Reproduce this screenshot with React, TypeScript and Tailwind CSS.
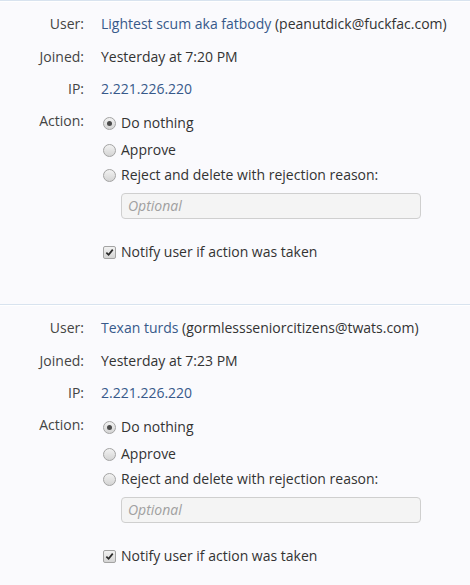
type Entry = {
  name: string;
  email: string;
  joined: string;
  ip: string;
};

const entries: Entry[] = [
  {
    name: "Lightest scum aka fatbody",
    email: "peanutdick@fuckfac.com",
    joined: "Yesterday at 7:20 PM",
    ip: "2.221.226.220",
  },
  {
    name: "Texan turds",
    email: "gormlessseniorcitizens@twats.com",
    joined: "Yesterday at 7:23 PM",
    ip: "2.221.226.220",
  },
];

function Radio({ checked }: { checked?: boolean }) {
  return (
    <span className="ml-[2px] mr-[5px] flex h-[13px] w-[13px] shrink-0 items-center justify-center rounded-full border border-[#a3a3a3] bg-gradient-to-b from-[#f2f2f2] to-[#d4d4d4]">
      {checked && (
        <span className="h-[5px] w-[5px] rounded-full bg-[#4a4a4a]" />
      )}
    </span>
  );
}

function Checkbox() {
  return (
    <span className="ml-[2px] mr-[5px] flex h-[13px] w-[13px] shrink-0 items-center justify-center rounded-[2px] border border-[#a3a3a3] bg-gradient-to-b from-[#f2f2f2] to-[#d4d4d4]">
      <svg viewBox="0 0 10 10" className="h-[9px] w-[9px]">
        <path
          d="M1.5 5.2 L4 7.6 L8.6 1.8"
          fill="none"
          stroke="#2a2a2a"
          strokeWidth="1.9"
        />
      </svg>
    </span>
  );
}

function Row({
  label,
  className = "",
  children,
}: {
  label: string;
  className?: string;
  children: React.ReactNode;
}) {
  return (
    <div className={`flex ${className}`}>
      <div className="h-[18px] w-[84px] shrink-0 text-right leading-[18px] text-[#444]">
        {label}
      </div>
      <div className="ml-[17px] min-w-0 leading-[18px] text-[#333]">
        {children}
      </div>
    </div>
  );
}

function Section({ entry }: { entry: Entry }) {
  return (
    <section className="border-t border-[#d8e3ef]">
      <div className="border-t border-white pt-[13px] pb-[43px]">
        <Row label="User:">
          <span className="whitespace-nowrap">
            <a className="text-[#37598a]">{entry.name}</a> ({entry.email})
          </span>
        </Row>
        <Row label="Joined:" className="mt-[15px]">
          {entry.joined}
        </Row>
        <Row label="IP:" className="mt-[14px]">
          <a className="text-[#37598a]">{entry.ip}</a>
        </Row>
        <Row label="Action:" className="mt-[14px]">
          <div className="pt-[2px]">
            <label className="flex h-[18px] items-center">
              <Radio checked />
              Do nothing
            </label>
            <label className="mt-[9px] flex h-[18px] items-center">
              <Radio />
              Approve
            </label>
            <label className="mt-[7px] flex h-[18px] items-center">
              <Radio />
              Reject and delete with rejection reason:
            </label>
            <div className="ml-[20px] mt-[9px] flex h-[26px] w-[300px] items-center rounded-[4px] border border-[#cfcfcf] bg-[#f4f4f4] px-[6px] italic text-[#a0a0a0]">
              Optional
            </div>
            <label className="mt-[24px] flex h-[18px] items-center">
              <Checkbox />
              Notify user if action was taken
            </label>
          </div>
        </Row>
      </div>
    </section>
  );
}

export default function App() {
  return (
    <div className="min-h-screen bg-[#fafafd] text-[14px] font-['Open_Sans',sans-serif]">
      {entries.map((e) => (
        <Section key={e.email} entry={e} />
      ))}
    </div>
  );
}
